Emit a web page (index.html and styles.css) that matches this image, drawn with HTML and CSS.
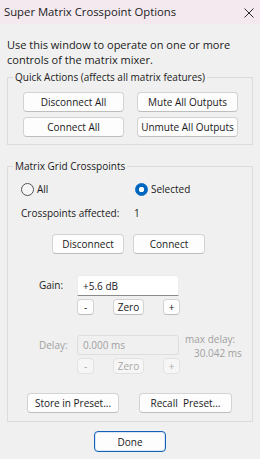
FILE: index.html
```html
<!DOCTYPE html>
<html lang="en">
<head>
<meta charset="utf-8">
<title>Super Matrix Crosspoint Options</title>
<link rel="stylesheet" href="styles.css">
</head>
<body>
<div class="window">
  <div class="titlebar">
    <span class="title">Super Matrix Crosspoint Options</span>
    <svg class="close" width="10" height="10" viewBox="0 0 10 10" aria-hidden="true">
      <path d="M0.5 0.5 L9.5 9.5 M9.5 0.5 L0.5 9.5" stroke="#2b2b2b" stroke-width="1" fill="none"/>
    </svg>
  </div>

  <p class="intro">Use this window to operate on one or more controls of the matrix mixer.</p>

  <fieldset class="group">
    <legend>Quick Actions (affects all matrix features)</legend>
    <div class="quick-grid">
      <button class="btn">Disconnect All</button>
      <button class="btn">Mute All Outputs</button>
      <button class="btn">Connect All</button>
      <button class="btn">Unmute All Outputs</button>
    </div>
  </fieldset>

  <fieldset class="group crosspoints">
    <legend>Matrix Grid Crosspoints</legend>
    <div class="radios">
      <label class="radio"><span class="dot"></span>All</label>
      <label class="radio"><span class="dot checked"></span>Selected</label>
    </div>
    <div class="affected"><span class="affected-label">Crosspoints affected:</span><span>1</span></div>
    <div class="pair">
      <button class="btn">Disconnect</button>
      <button class="btn">Connect</button>
    </div>

    <div class="param">
      <span class="plabel">Gain:</span>
      <div class="pcontrol">
        <div class="field">+5.6 dB</div>
        <div class="steps">
          <button class="btn mini">-</button>
          <button class="btn mini zero">Zero</button>
          <button class="btn mini">+</button>
        </div>
      </div>
    </div>

    <div class="param delay disabled">
      <span class="plabel">Delay:</span>
      <div class="pcontrol">
        <div class="field">0.000 ms</div>
        <div class="steps">
          <button class="btn mini">-</button>
          <button class="btn mini zero">Zero</button>
          <button class="btn mini">+</button>
        </div>
      </div>
      <div class="maxdelay"><span>max delay:</span><span class="maxval">30.042 ms</span></div>
    </div>

    <div class="presets">
      <button class="btn store">Store in Preset...</button>
      <button class="btn recall">Recall&nbsp; Preset...</button>
    </div>
  </fieldset>

  <div class="footer">
    <button class="btn default">Done</button>
  </div>
</div>
</body>
</html>
```
FILE: styles.css
```css
* { box-sizing: border-box; }

html, body {
  margin: 0;
  padding: 0;
  background: #f0f0f0;
}

body {
  font-family: "Open Sans", "Noto Sans", "Liberation Sans", sans-serif;
  font-size: 10px;
  line-height: 14px;
  color: #1a1a1a;
}

.window {
  width: 260px;
  height: 459px;
  display: flex;
  flex-direction: column;
}

.titlebar {
  height: 24px;
  flex: none;
  display: flex;
  align-items: center;
  padding: 0 6px 0 4px;
  background: #f3e9ef;
}

.title {
  font-size: 11.3px;
  line-height: 24px;
  color: #1b1b1b;
}

.close {
  margin-left: auto;
  margin-top: 1px;
}

.intro {
  margin: 13px 7px 0 7px;
  font-size: 11px;
  line-height: 15px;
}

.group {
  margin: 3px 7px 0 7px;
  padding: 0 0 7px 0;
  border: 1px solid #dcdcdc;
  min-width: 0;
}

.group legend {
  margin-left: 5px;
  padding: 0 2px;
  line-height: 14px;
}

.quick-grid {
  margin: 8px 0 0 15px;
  display: grid;
  grid-template-columns: 101px 101px;
  grid-auto-rows: 20px;
  column-gap: 13px;
  row-gap: 5px;
}

.btn {
  font-family: inherit;
  font-size: 10px;
  line-height: 14px;
  color: #1a1a1a;
  background: #fdfdfd;
  border: 1px solid #d3d3d3;
  border-bottom-color: #bdbdbd;
  border-radius: 4px;
  padding: 0;
  margin: 0;
  height: 20px;
  white-space: nowrap;
}

.crosspoints {
  margin-top: 14px;
  padding-bottom: 8px;
}

.radios {
  margin: 10px 0 0 13px;
  display: grid;
  grid-template-columns: 114px auto;
  height: 13px;
}

.radio {
  display: flex;
  align-items: center;
  gap: 3px;
  line-height: 13px;
}

.dot {
  width: 13px;
  height: 13px;
  border-radius: 50%;
  border: 1px solid #545454;
  background: #f6f6f6;
  flex: none;
}

.dot.checked {
  border-color: #0067c0;
  background: radial-gradient(circle, #ffffff 0 2.4px, #0067c0 3px);
}

.affected {
  margin: 10px 0 0 13px;
  display: grid;
  grid-template-columns: 113px auto;
}

.pair {
  margin: 14px 0 0 44px;
  display: flex;
  gap: 9px;
}

.pair .btn {
  width: 72px;
}

.param {
  margin: 21px 0 0 31px;
  display: grid;
  grid-template-columns: 38px 102px auto;
  align-items: start;
}

.plabel {
  line-height: 21px;
}

.field {
  height: 21px;
  display: flex;
  align-items: center;
  padding-left: 5px;
  background: #ffffff;
  border: 1px solid #ececec;
  border-bottom-color: #8a8a8a;
  border-radius: 3px 3px 0 0;
}

.steps {
  width: 103px;
  margin-top: 3px;
  display: flex;
  justify-content: space-between;
}

.btn.mini {
  height: 16px;
  width: 17px;
  line-height: 14px;
}

.btn.mini.zero {
  width: 31px;
}

.delay {
  margin-top: 20px;
}

.delay .plabel {
  line-height: 20px;
}

.delay .field {
  height: 20px;
  background: #f0f0f0;
  border: 1px solid #dedede;
  border-radius: 3px;
}

.disabled {
  color: #a0a0a0;
}

.disabled .btn {
  color: #a8a8a8;
  background: #f6f6f6;
  border-color: #e2e2e2;
}

.maxdelay {
  margin: -2px 0 0 6px;
  display: flex;
  flex-direction: column;
  line-height: 13.7px;
  white-space: nowrap;
}

.maxval {
  padding-left: 9px;
}

.presets {
  margin: 19px 0 0 19px;
  display: flex;
  gap: 20px;
}

.btn.store {
  width: 92px;
}

.btn.recall {
  width: 93px;
}

.footer {
  margin-top: 9px;
  display: flex;
  justify-content: center;
}

.btn.default {
  width: 72px;
  height: 21px;
  border: 1px solid #1362b7;
  box-shadow: inset 0 0 0 1px #d9e6f4;
}
```
